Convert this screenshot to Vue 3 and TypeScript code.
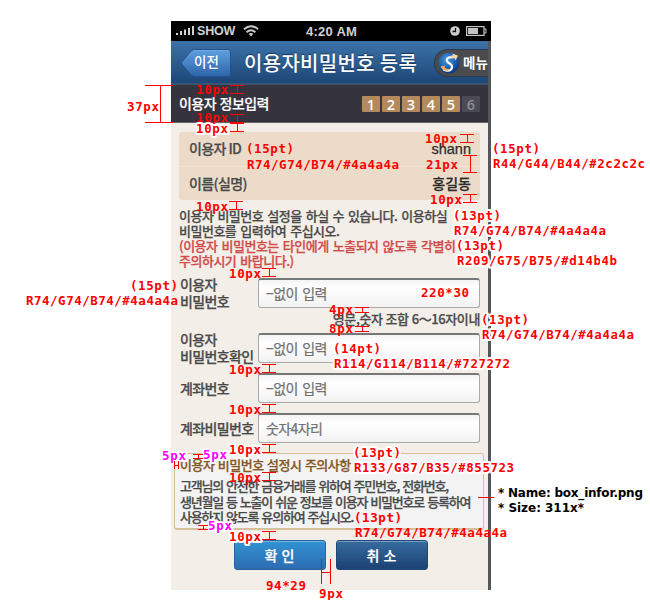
<script setup lang="ts">
interface Note { x: number; y: number; t: string; halo?: boolean; c?: string }
interface Beam { x: number; y1: number; y2: number; w?: number }

const steps: number[] = [1, 2, 3, 4, 5, 6]
const current = 5

const fields = [
  { label: ['이용자', '비밀번호'], value: '−없이 입력', help: '영문,숫자 조합 6～16자이내' },
  { label: ['이용자', '비밀번호확인'], value: '−없이 입력', help: '' },
  { label: ['계좌번호'], value: '−없이 입력', help: '' },
  { label: ['계좌비밀번호'], value: '숫자4자리', help: '' },
]

const notes: Note[] = [
  { x: 127, y: 111, t: '37px' },
  { x: 196, y: 94, t: '10px' },
  { x: 196, y: 122, t: '10px' },
  { x: 196, y: 133, t: '10px', halo: true },
  { x: 425, y: 143, t: '10px' },
  { x: 426, y: 169, t: '21px' },
  { x: 430, y: 204, t: '10px' },
  { x: 196, y: 211, t: '10px' },
  { x: 229, y: 278, t: '10px' },
  { x: 329, y: 314, t: '4px' },
  { x: 329, y: 333, t: '8px' },
  { x: 229, y: 374, t: '10px' },
  { x: 229, y: 414, t: '10px' },
  { x: 229, y: 454, t: '10px', halo: true },
  { x: 229, y: 482, t: '10px' },
  { x: 229, y: 541, t: '10px', halo: true },
  { x: 162, y: 460, t: '5px', c: 'pink', halo: true },
  { x: 203, y: 459, t: '5px', c: 'pink', halo: true },
  { x: 208, y: 530, t: '5px', c: 'pink', halo: true },
  { x: 246, y: 153, t: '(15pt)' },
  { x: 247, y: 169, t: 'R74/G74/B74/#4a4a4a' },
  { x: 492, y: 153, t: '(15pt)', halo: true },
  { x: 493, y: 168, t: 'R44/G44/B44/#2c2c2c', halo: true },
  { x: 453, y: 220, t: '(13pt)', halo: true },
  { x: 454, y: 235, t: 'R74/G74/B74/#4a4a4a', halo: true },
  { x: 456, y: 250, t: '(13pt)', halo: true },
  { x: 457, y: 265, t: 'R209/G75/B75/#d14b4b', halo: true },
  { x: 421, y: 297, t: '220*30' },
  { x: 481, y: 324, t: '(13pt)', halo: true },
  { x: 482, y: 339, t: 'R74/G74/B74/#4a4a4a', halo: true },
  { x: 130, y: 290, t: '(15pt)' },
  { x: 26, y: 305, t: 'R74/G74/B74/#4a4a4a' },
  { x: 333, y: 353, t: '(14pt)', halo: true },
  { x: 334, y: 368, t: 'R114/G114/B114/#727272', halo: true },
  { x: 353, y: 457, t: '(13pt)', halo: true },
  { x: 354, y: 472, t: 'R133/G87/B35/#855723', halo: true },
  { x: 354, y: 522, t: '(13pt)' },
  { x: 355, y: 537, t: 'R74/G74/B74/#4a4a4a' },
  { x: 266, y: 590, t: '94*29' },
  { x: 319, y: 598, t: '9px' },
]

const beams: Beam[] = [
  { x: 230, y1: 85, y2: 93 },
  { x: 230, y1: 114, y2: 122 },
  { x: 230, y1: 123, y2: 131 },
  { x: 460, y1: 134, y2: 142 },
  { x: 463, y1: 155, y2: 172 },
  { x: 463, y1: 194, y2: 202 },
  { x: 229, y1: 201, y2: 209 },
  { x: 262, y1: 268, y2: 276 },
  { x: 355, y1: 307, y2: 312 },
  { x: 355, y1: 326, y2: 331 },
  { x: 262, y1: 364, y2: 372 },
  { x: 262, y1: 404, y2: 412 },
  { x: 262, y1: 444, y2: 452 },
  { x: 262, y1: 472, y2: 480 },
  { x: 262, y1: 531, y2: 539 },
  { x: 193, y1: 454, y2: 458, w: 10 },
  { x: 198, y1: 525, y2: 529, w: 10 },
]

const beamPath = (b: Beam): string => {
  const w = b.w ?? 14
  return `M${b.x} ${b.y1 + 0.5}h${w}M${b.x} ${b.y2 + 0.5}h${w}M${b.x + w / 2 + 0.5} ${b.y1}V${b.y2 + 1}`
}
</script>

<template>
  <div class="stage">
    <main class="phone">
      <div class="status">
        <svg class="signal" width="19" height="10" viewBox="0 0 19 10"><path d="M0 7h2v2H0zM4 5h2v4H4zM8 3.500h2V9H8zM12 2h2v7h-2zM16 0h2v9h-2z" fill="#d0d0d0" /></svg>
        <span class="carrier">SHOW</span>
        <svg class="wifi" width="16" height="12" viewBox="0 0 16 12" fill="none" stroke="#c9c9c9" stroke-width="2"><path d="M1 4.2Q8-1.8 15 4.2M3.600 7.200Q8 3.300 12.400 7.200" /><path d="M5.600 8.800Q8 7 10.400 8.800L8 11.500z" fill="#c9c9c9" stroke="none" /></svg>
        <span class="time">4:20 AM</span>
        <svg class="clock" width="10" height="10" viewBox="0 0 10 10"><circle cx="5" cy="5" r="4.800" fill="#cfcfcf" /><path d="M5.500 2v3.500H2.500" stroke="#111" stroke-width="1.300" fill="none" /></svg>
        <svg class="battery" width="21" height="10" viewBox="0 0 21 10"><rect x=".6" y=".6" width="17.400" height="8.800" fill="none" stroke="#c4c4c4" stroke-width="1.200" /><path d="M2 2h10v6H2z" fill="#c4c4c4" /><path d="M18 3h2v4h-2" fill="none" stroke="#c4c4c4" /></svg>
      </div>
      <div class="screen">
        <header class="nav">
          <button class="back">
            <svg width="53" height="30" viewBox="0 0 53 30">
              <defs><linearGradient id="bk" x2="0" y2="1"><stop offset="0" stop-color="#60a0df" /><stop offset="1" stop-color="#2d64aa" /></linearGradient></defs>
              <path d="M2 15L12 3Q14 1.500 16 1.500H49Q51.500 1.500 51.500 4V26Q51.500 28.500 49 28.500H16Q14 28.500 12 27Z" fill="url(#bk)" stroke="#23528c" />
              <path d="M14 2.500H50" stroke="#78aee4" opacity=".6" />
            </svg>
            <span>이전</span>
          </button>
          <h1>이용자비밀번호 등록</h1>
          <button class="menu">
            <svg width="22" height="22" viewBox="0 0 22 22">
              <defs><radialGradient id="gl" cx=".4" cy=".35" r=".7"><stop offset="0" stop-color="#4b9be0" /><stop offset=".6" stop-color="#1c5cae" /><stop offset="1" stop-color="#0d3272" /></radialGradient></defs>
              <circle cx="11" cy="11" r="10.500" fill="url(#gl)" />
              <path d="M15.500 5.500Q9 4.500 8.800 8Q8.800 10 12 11.800Q15.500 14 13 17.500Q10 20 5.500 17.500" fill="none" stroke="#fff" stroke-width="2.200" />
              <path d="M11.500 5.200Q12.500 3.300 15 3.200L14.500 1.600L20 3.800L17.500 8.500L16.500 6.200Q14 5.500 11.500 5.200Z" fill="#f8d3a8" />
              <path d="M2.500 14.500L7 13.500L6.500 15.500Q8.500 17.500 12 17Q9 20.500 4.500 17.500Z" fill="#f2ae62" />
            </svg>
            <span>메뉴</span>
          </button>
        </header>
        <div class="sub">
          <h2>이용자 정보입력</h2>
          <ol class="steps">
            <li v-for="s in steps" :key="s" :class="{ off: s > current }">{{ s }}</li>
          </ol>
        </div>
        <section class="content">
          <dl class="info">
            <div class="row"><dt>이용자 ID</dt><dd class="latin">shann</dd></div>
            <div class="row"><dt>이름(실명)</dt><dd>홍길동</dd></div>
          </dl>
          <p class="guide">이용자 비밀번호 설정을 하실 수 있습니다. 이용하실<br />비밀번호를 입력하여 주십시오.</p>
          <p class="guide warn">(이용자 비밀번호는 타인에게 노출되지 않도록 각별히<br />주의하시기 바랍니다.)</p>
          <form class="form">
            <template v-for="(f, i) in fields" :key="i">
              <div class="field">
                <label><span v-for="l in f.label" :key="l">{{ l }}</span></label>
                <div class="input">{{ f.value }}</div>
              </div>
              <p v-if="f.help" class="help">{{ f.help }}</p>
            </template>
          </form>
          <section class="notice">
            <h3>이용자 비밀번호 설정시 주의사항</h3>
            <p>고객님의 안전한 금융거래를 위하여 주민번호, 전화번호,<br />생년월일 등 노출이 쉬운 정보를 이용자 비밀번호로 등록하여<br />사용하지 않도록 유의하여 주십시오.</p>
          </section>
          <div class="actions">
            <button class="btn ok">확 인</button>
            <button class="btn cancel">취 소</button>
          </div>
        </section>
      </div>
    </main>
    <svg class="spec" width="650" height="600" viewBox="0 0 650 600">
      <text v-for="(n, i) in notes" :key="i" :x="n.x" :y="n.y" :textLength="n.t.length * 8" :class="[n.c, { halo: n.halo }]">{{ n.t }}</text>
      <g class="lines">
        <path v-for="(b, i) in beams" :key="i" :d="beamPath(b)" />
        <path d="M145 85.500h28M145 122.500h28M160.500 85v38" />
        <path d="M174.500 461v8M178.500 461v8M174 465.500h5" />
        <path d="M321.500 559v25M330.500 559v25M321 572.500h10" />
        <path d="M478 497.500h16" />
      </g>
      <text class="asset" x="498" y="497" textLength="145">* Name: box_infor.png</text>
      <text class="asset" x="498" y="512" textLength="86">* Size: 311x*</text>
    </svg>
  </div>
</template>

<style>
body { background: #fff; }
</style>

<style scoped>
* { box-sizing: border-box; margin: 0; padding: 0; }
.stage { position: relative; width: 650px; height: 600px; padding: 21px 0 0 171px; overflow: hidden; background: #fff; font-family: "Noto Sans CJK KR", sans-serif; }
button { border: 0; background: none; font-family: inherit; }
.phone { width: 320px; height: 569px; background: #53565b; display: flex; flex-direction: column; }
.status { height: 20px; flex: none; background: #000; display: flex; align-items: center; padding: 0 4px 1px 5px; color: #d2d2d2; font: bold 13px/19px "Liberation Sans", sans-serif; }
.carrier { width: 38px; margin-left: 2px; padding-top: 1px; font-size: 12.500px; letter-spacing: -0.200px; }
.wifi { margin-left: 8px; }
.time { margin-left: 47px; padding-top: 1px; width: 54px; letter-spacing: 0.250px; white-space: nowrap; }
.clock { margin-left: auto; }
.battery { margin-left: 6px; }
.screen { width: 317px; height: 549px; background: #f4eee8; }
.nav { height: 44px; display: flex; align-items: center; background: linear-gradient(#3d73a9, #1c4777); border-bottom: 2px solid #3b5472; padding-left: 8px; }
.back { display: grid; width: 53px; height: 30px; margin-top: 2px; }
.back > * { grid-area: 1 / 1; }
.back span { color: #fff; font-size: 13.500px; font-weight: 500; line-height: 27px; padding-left: 2px; }
h1 { margin-left: 12px; width: 180px; color: #fff; font-size: 20px; font-weight: 500; line-height: 40px; padding-top: 1px; white-space: nowrap; letter-spacing: 0.300px; text-shadow: 0 -1px 1px #16365d; }
.menu { margin-left: auto; display: flex; align-items: center; width: 54px; height: 28px; margin-top: 2px; background: #4b4b4e; border: 1px solid #29394e; border-right: 0; border-radius: 14px 0 0 14px; padding-left: 3px; }
.menu svg { flex: none; }
.menu span { margin-left: 3px; color: #fff; font-size: 13.500px; font-weight: 700; line-height: 24px; padding-bottom: 2px; white-space: nowrap; }
.sub { height: 38px; background: #35343e; border-bottom: 1px solid #64636b; display: flex; align-items: center; justify-content: space-between; padding: 0 8px; }
h2 { color: #fff; font-size: 14px; font-weight: 500; line-height: 33px; padding-bottom: 1px; letter-spacing: -0.550px; word-spacing: 1px; -webkit-text-stroke: 0.200px #fff; }
.steps { display: flex; gap: 2px; list-style: none; }
.steps li { width: 18px; height: 16px; background: #b48a5c; color: #fff; border-radius: 1px; font: 600 14.500px/17px "Open Sans", sans-serif; text-align: center; }
.steps li.off { background: #4c4b55; color: #8d8d91; }
.content { padding: 9px 4px 0 3px; -webkit-text-stroke-width: 0.250px; }
.info { margin: 0 4px 0 5px; height: 68px; background: #ecdbc8; border-radius: 3px; color: #4a4a4a; font-size: 14px; font-weight: 500; }
.row { height: 34px; display: flex; justify-content: space-between; padding: 0 9px 0 10px; line-height: 32px; letter-spacing: -0.600px; }
.row + .row { border-top: 1px solid #f0e4d7; line-height: 33px; }
.row dd { color: #2c2c2c; letter-spacing: 0; }
.row dd.latin { font: 14.500px/34px "Liberation Sans", sans-serif; }
.guide { margin-left: 5px; color: #4a4a4a; font-size: 13px; font-weight: 500; line-height: 15px; letter-spacing: -0.500px; word-spacing: 1.600px; white-space: nowrap; }
.info + .guide { margin-top: 8px; }
.guide.warn { color: #d14b4b; }
.form { display: flex; flex-direction: column; gap: 10px; margin: 10px 4px 0 6px; }
.field { display: flex; justify-content: space-between; height: 30px; align-items: center; }
label { display: flex; flex-direction: column; color: #4a4a4a; font-size: 14px; font-weight: 500; line-height: 17px; letter-spacing: -0.650px; white-space: nowrap; }
.input { width: 222px; flex: none; height: 30px; border: 1px solid #aaa; border-top: 2px solid #777; border-radius: 3px; background: linear-gradient(#f4f4f4, #fff 30%, #f2f2f2); padding-left: 7px; color: #727272; font-size: 14px; line-height: 26px; letter-spacing: -0.600px; word-spacing: 2px; }
.help { height: 15px; margin: -5px 0 -5px; text-align: right; font-size: 13px; font-weight: 500; line-height: 12px; letter-spacing: -0.400px; word-spacing: 0.500px; color: #4a4a4a; }
.notice { height: 77px; margin-top: 10px; border: 1px solid #d8bf9c; border-bottom-width: 2px; border-radius: 3px; background: #f3f3f3; padding: 3px 5px; color: #4a4a4a; white-space: nowrap; }
h3 { color: #855723; font-size: 13px; font-weight: 500; line-height: 15px; letter-spacing: -0.500px; word-spacing: 1px; }
.notice p { margin-top: 6px; font-size: 13px; font-weight: 500; line-height: 15.500px; letter-spacing: -1.200px; word-spacing: 1.300px; }
.actions { display: flex; justify-content: center; gap: 10px; margin-top: 10px; padding-left: 3px; }
.btn { width: 92px; height: 30px; border: 1px solid #1b4f85; border-radius: 3px; color: #fff; font-size: 14px; font-weight: 500; line-height: 26px; word-spacing: 1px; box-shadow: inset 0 1px 0 #ffffff55; }
.ok { background: linear-gradient(#3093d2, #2e6bb2); border-color: #28619f; }
.cancel { background: linear-gradient(#366c9f, #1d4273); border-color: #1f4878; }
.spec { position: absolute; left: 0; top: 0; }
.lines { stroke: #f00; fill: none; stroke-width: 1; }
.spec text { font: bold 12.500px "DejaVu Sans Mono", monospace; fill: #f00; }
.spec text.pink { fill: #f0f; }
.spec text.halo { stroke: #fff; stroke-width: 4px; stroke-linejoin: round; paint-order: stroke; }
.spec text.asset { font: bold 12px "DejaVu Sans", sans-serif; fill: #000; }
</style>
